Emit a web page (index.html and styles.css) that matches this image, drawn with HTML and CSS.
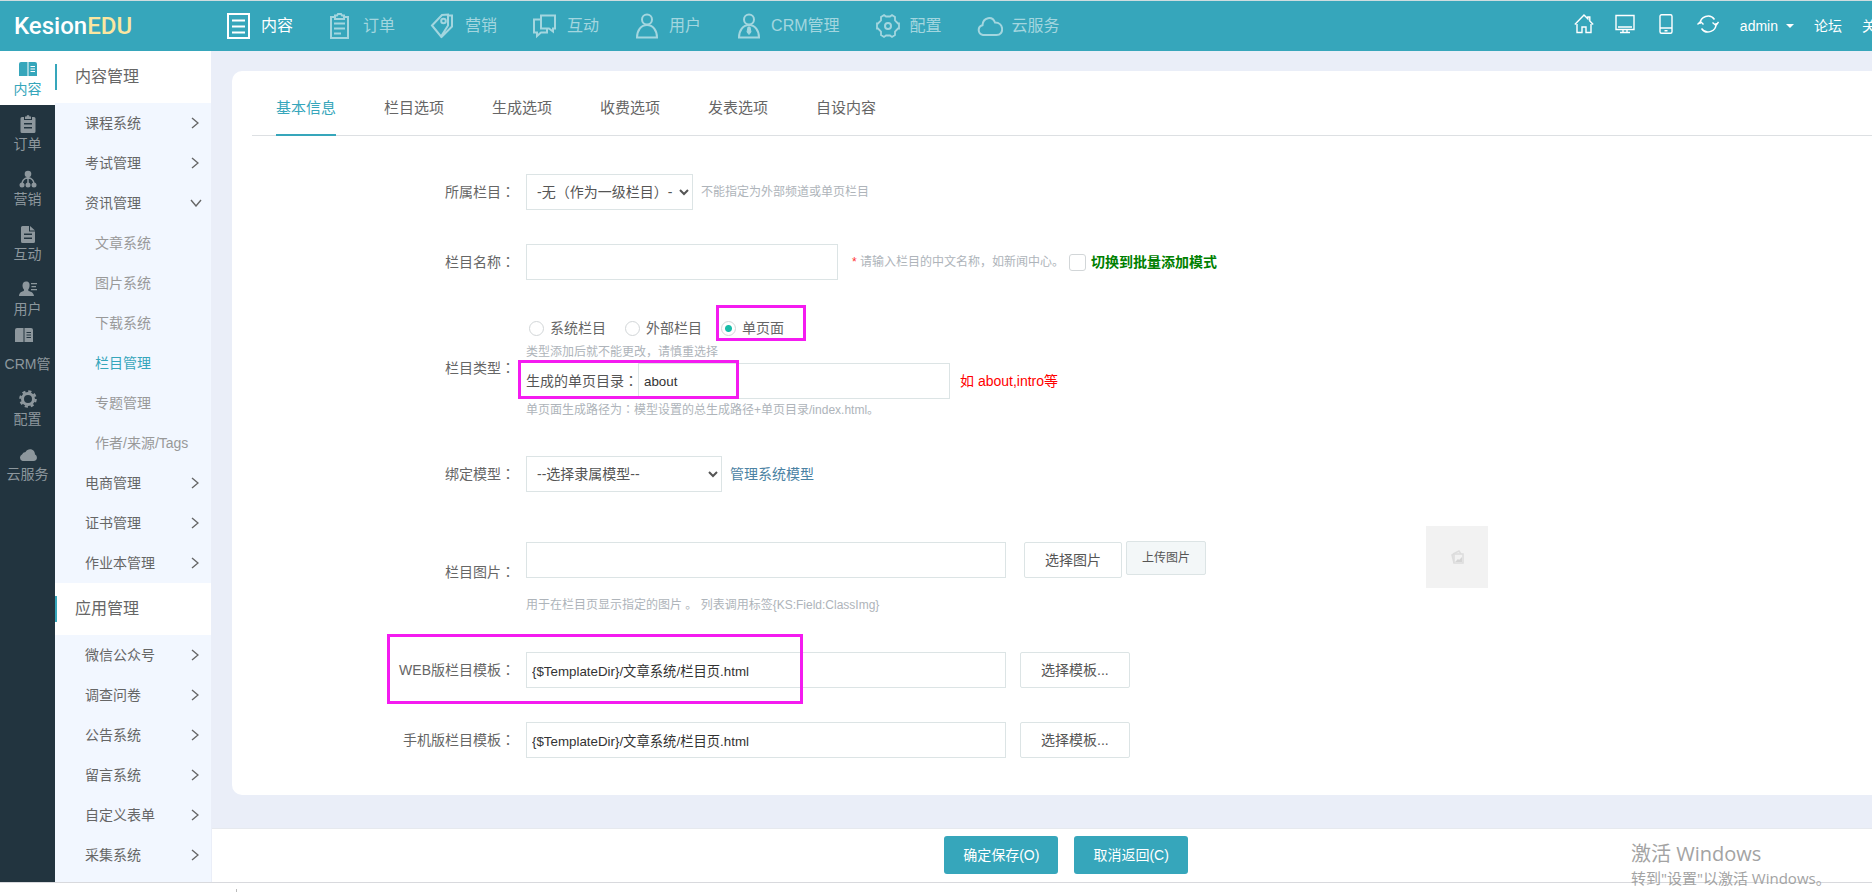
FILE: index.html
```html
<!DOCTYPE html>
<html lang="zh-CN">
<head>
<meta charset="utf-8">
<title>KesionEDU</title>
<link rel="stylesheet" href="styles.css">
</head>
<body>
<svg class="defs" aria-hidden="true">
  <symbol id="right" viewBox="0 0 8 12"><path d="M1 1l6 5-6 5" fill="none" stroke="currentColor" stroke-width="1.4"/></symbol>
  <symbol id="down" viewBox="0 0 12 8"><path d="M1 1l5 6 5-6" fill="none" stroke="currentColor" stroke-width="1.4"/></symbol>
  <symbol id="book" viewBox="0 0 18 14"><path d="M2 0h6.500v14H0V2a2 2 0 0 1 2-2zM9.500 0H16a2 2 0 0 1 2 2v12H9.500zM11.500 4v1H16V4zm0 2.500v1H16v-1zm0 2.500v1H16V9z" fill="currentColor" fill-rule="evenodd"/></symbol>
</svg>
<header class="topbar">
  <a class="logo" href="#">Kesion<span class="logo-edu">EDU</span></a>
  <nav class="topnav">
    <a class="topnav-item active" href="#"><svg class="nav-icon" viewBox="0 0 26 26"><path d="M2 1h21v24H2zM6 7.500h13M6 13.500h13M6 19.500h13"/></svg>内容</a>
    <a class="topnav-item" href="#"><svg class="nav-icon" viewBox="0 0 26 26"><path d="M7 4H3v21h17V4h-4M7 2.500h2l1-1.500h3l1 1.500h2V6H7zM6 10.500h11M6 15.500h11M6 20.500h7"/></svg>订单</a>
    <a class="topnav-item" href="#"><svg class="nav-icon" viewBox="0 0 26 26"><path d="M2 12.500L12 2l6-.5v11L11 23.500zM18 2.500h4v11L11 24.500"/><circle cx="13.500" cy="8" r="2.300"/></svg>营销</a>
    <a class="topnav-item" href="#"><svg class="nav-icon" viewBox="0 0 26 26"><path d="M9 2.500h14v13h-2v3l-4-3H9zM9 6.500H2v13h3V23l4-3.500h6v-4"/></svg>互动</a>
    <a class="topnav-item" href="#"><svg class="nav-icon" viewBox="0 0 26 26"><circle cx="13" cy="6.500" r="5"/><path d="M3 24.500c0-7 4-12.500 10-12.500s10 5.500 10 12.500z"/></svg>用户</a>
    <a class="topnav-item" href="#"><svg class="nav-icon" viewBox="0 0 26 26"><circle cx="13" cy="6.500" r="5"/><path d="M3 24.500c0-7 4-12.500 10-12.500s10 5.500 10 12.500z"/><path d="M12 14h2l1 5-2 2.500-2-2.500z" fill="currentColor" stroke-width="1"/></svg>CRM管理</a>
    <a class="topnav-item" href="#"><svg class="nav-icon" viewBox="0 0 26 26"><path d="M9 2l2 1.500h4L17 2l3 2v3.500l3 3h1v5h-1l-3 3V22l-3 2-2-1.500h-4L9 24l-3-2v-3.500l-3-3H2v-5h1l3-3V4z" stroke-width="1.800"/><circle cx="13" cy="13" r="3"/></svg>配置</a>
    <a class="topnav-item" href="#"><svg class="nav-icon" viewBox="0 0 26 26"><path d="M6 22a5 5 0 0 1-.5-9.800C6 4 15.500 2.500 18 9.500c9 0 9.500 12.500 1.500 12.500z"/></svg>云服务</a>
  </nav>
  <div class="tools">
    <a class="tool" href="#" aria-label="首页"><svg class="tool-icon" viewBox="0 0 20 20"><path d="M.8 10.500L10 1l3.800 3.800V3h2v4l3.400 3.500M3 10v8.500h5V13h4v5.500h5V10"/></svg></a>
    <a class="tool" href="#" aria-label="电脑版"><svg class="tool-icon" viewBox="0 0 20 20"><path d="M1 1.500h18v14H1zM3 13h14M8 16v2M12 16v2M5 18.500h10"/></svg></a>
    <a class="tool" href="#" aria-label="手机版"><svg class="tool-icon" viewBox="0 0 20 20"><rect x="4" y=".7" width="12" height="18.500" rx="1.500"/><path d="M4 14h12M8.500 16.800h3"/></svg></a>
    <a class="tool" href="#" aria-label="刷新"><svg class="tool-icon refresh" viewBox="0 0 22 20"><path d="M3 10a8 8 0 0 1 14.500-4.500M19 9a8 8 0 0 1-14.500 5.500M.5 10.500L3.500 7.500l3 3M15.500 8.500l3.500 3 2.500-3.500"/></svg></a>
    <a class="user" href="#">admin <span class="caret"></span></a>
    <a class="tool-text" href="#">论坛</a>
    <a class="tool-text" href="#">关于</a>
  </div>
</header>
<div class="body">
  <nav class="rail">
    <a class="rail-item active" href="#"><svg class="rail-icon" viewBox="0 0 18 18"><use href="#book" width="18" height="14" y="2"/></svg>内容</a>
    <a class="rail-item" href="#"><svg class="rail-icon" viewBox="0 0 18 18"><path fill-rule="evenodd" d="M3 2h2v3h8V2h2a1.500 1.500 0 0 1 1.500 1.500v13A1.500 1.500 0 0 1 15 18H3a1.500 1.500 0 0 1-1.500-1.500v-13A1.500 1.500 0 0 1 3 2zM6 1.500h1.500a1.500 1.500 0 0 1 3 0H12V4H6zM5 8v1.500h8V8zm0 4v1.500h8V12z"/></svg>订单</a>
    <a class="rail-item" href="#"><svg class="rail-icon" viewBox="0 0 18 18"><circle cx="9" cy="4" r="3.300"/><circle cx="3" cy="15" r="2.500"/><circle cx="9" cy="15" r="2.500"/><circle cx="15" cy="15" r="2.500"/><path d="M9 6v8M9 7.500Q3 9 3 14M9 7.500q6 1.500 6 6.500" fill="none" stroke="currentColor" stroke-width="1.500"/></svg>营销</a>
    <a class="rail-item" href="#"><svg class="rail-icon" viewBox="0 0 18 18"><path fill-rule="evenodd" d="M3.500 1H10v5.500h6v10a1.500 1.500 0 0 1-1.500 1.500h-11A1.500 1.500 0 0 1 2 16.500v-14A1.500 1.500 0 0 1 3.500 1zM11 1l5 4.500h-5zM5 8.500V10h8V8.500zm0 4V14h8v-1.500z"/></svg>互动</a>
    <a class="rail-item" href="#"><svg class="rail-icon" viewBox="0 0 18 18"><path d="M7 1.500c3 0 4 2 3.500 5-.3 1.500-.8 2.500-1.300 3l.3 1.500c3 1 5 1.500 5.500 5H0c.3-3.500 2-4 4.800-5L5 9.500C4 8.500 3.500 7 3.500 5.500c0-2.500 1.500-4 3.500-4zM12 3h6v1.300h-6zM12.500 6H17v1.300h-4.500zM12 9h6v1.300h-6z"/></svg>用户</a>
    <a class="rail-item wrapped" href="#"><svg class="rail-icon" viewBox="0 0 18 18"><use href="#book" width="18" height="14" y="2"/></svg>CRM管</a>
    <a class="rail-item" href="#"><svg class="rail-icon" viewBox="0 0 18 18"><circle cx="9" cy="9" r="5.500" fill="none" stroke="currentColor" stroke-width="3"/><circle cx="9" cy="9" r="7.700" fill="none" stroke="currentColor" stroke-width="2.200" stroke-dasharray="3.200 2.850"/></svg>配置</a>
    <a class="rail-item" href="#"><svg class="rail-icon" viewBox="0 0 18 18"><path d="M3.500 16A3.500 3.500 0 0 1 3 9.500 4 4 0 0 1 6.500 7C9 2.500 16 4 16 9.500c3 1.500 2.500 6.500-1.500 6.500z"/></svg>云服务</a>
  </nav>
  <nav class="menu">
    <h2 class="menu-title">内容管理</h2>
    <a class="menu-item" href="#">课程系统<svg class="chev"><use href="#right"/></svg></a>
    <a class="menu-item" href="#">考试管理<svg class="chev"><use href="#right"/></svg></a>
    <a class="menu-item" href="#">资讯管理<svg class="chev open"><use href="#down"/></svg></a>
    <a class="menu-item sub" href="#">文章系统</a>
    <a class="menu-item sub" href="#">图片系统</a>
    <a class="menu-item sub" href="#">下载系统</a>
    <a class="menu-item sub current" href="#">栏目管理</a>
    <a class="menu-item sub" href="#">专题管理</a>
    <a class="menu-item sub" href="#">作者/来源/Tags</a>
    <a class="menu-item" href="#">电商管理<svg class="chev"><use href="#right"/></svg></a>
    <a class="menu-item" href="#">证书管理<svg class="chev"><use href="#right"/></svg></a>
    <a class="menu-item" href="#">作业本管理<svg class="chev"><use href="#right"/></svg></a>
    <h2 class="menu-title">应用管理</h2>
    <a class="menu-item" href="#">微信公众号<svg class="chev"><use href="#right"/></svg></a>
    <a class="menu-item" href="#">调查问卷<svg class="chev"><use href="#right"/></svg></a>
    <a class="menu-item" href="#">公告系统<svg class="chev"><use href="#right"/></svg></a>
    <a class="menu-item" href="#">留言系统<svg class="chev"><use href="#right"/></svg></a>
    <a class="menu-item" href="#">自定义表单<svg class="chev"><use href="#right"/></svg></a>
    <a class="menu-item" href="#">采集系统<svg class="chev"><use href="#right"/></svg></a>
  </nav>
  <main class="main">
    <section class="card">
      <div class="tabs">
        <a class="tab active" href="#">基本信息</a>
        <a class="tab" href="#">栏目选项</a>
        <a class="tab" href="#">生成选项</a>
        <a class="tab" href="#">收费选项</a>
        <a class="tab" href="#">发表选项</a>
        <a class="tab" href="#">自设内容</a>
      </div>
      <form class="form" id="column-form">
        <div class="row">
          <label class="label" for="parent">所属栏目<span class="colon" lang="zh-TW">：</span></label>
          <div class="line">
            <select class="select parent" id="parent"><option>-无（作为一级栏目）-</option></select>
            <span class="hint after-select">不能指定为外部频道或单页栏目</span>
          </div>
        </div>
        <div class="row">
          <label class="label" for="name">栏目名称<span class="colon" lang="zh-TW">：</span></label>
          <div class="line">
            <input class="input medium" id="name" type="text">
            <span class="hint after-name"><span class="star">*</span> 请输入栏目的中文名称，如新闻中心。</span>
            <input class="check" id="batch" type="checkbox"><label class="batch" for="batch">切换到批量添加模式</label>
          </div>
        </div>
        <div class="row">
          <span class="label">栏目类型<span class="colon" lang="zh-TW">：</span></span>
          <div class="kind">
            <div class="radios">
              <label class="radio-label"><input class="radio" type="radio" name="kind">系统栏目</label>
              <label class="radio-label"><input class="radio" type="radio" name="kind">外部栏目</label>
              <label class="radio-label"><input class="radio" type="radio" name="kind" checked>单页面<span class="mark mark-kind"></span></label>
            </div>
            <div class="hint">类型添加后就不能更改，请慎重选择</div>
            <div class="line folder">
              <label for="dir">生成的单页目录<span class="colon" lang="zh-TW">：</span></label>
              <input class="input medium" id="dir" type="text" value="about">
              <span class="example">如 about,intro等</span>
              <span class="mark mark-dir"></span>
            </div>
            <div class="hint">单页面生成路径为<span class="colon" lang="zh-TW">：</span>模型设置的总生成路径+单页目录/index.html。</div>
          </div>
        </div>
        <div class="row">
          <label class="label" for="model">绑定模型<span class="colon" lang="zh-TW">：</span></label>
          <div class="line">
            <select class="select model" id="model"><option>--选择隶属模型--</option></select>
            <a class="link after-select" href="#">管理系统模型</a>
          </div>
        </div>
        <div class="row">
          <label class="label" for="pic">栏目图片<span class="colon" lang="zh-TW">：</span></label>
          <div class="picture">
            <div class="picture-fields">
              <div class="line">
                <input class="input wide" id="pic" type="text">
                <button class="button pick" type="button">选择图片</button>
                <button class="button upload" type="button">上传图片</button>
              </div>
              <div class="hint picture-hint">用于在栏目页显示指定的图片 。 列表调用标签{KS:Field:ClassImg}</div>
            </div>
            <svg class="thumb" viewBox="0 0 62 62"><path d="M27 28l6-3 2 3M28 37l-2-8 2-1" fill="none" stroke="#ddd" stroke-width="1.500"/><rect x="28" y="28" width="9" height="9" fill="#f2f2f2" stroke="#dcdcdc" stroke-width="1.500"/><path d="M29 36l3-3 1 1 3-3v5z" fill="#d4d4d4"/></svg>
          </div>
        </div>
        <div class="row">
          <label class="label" for="web">WEB版栏目模板<span class="colon" lang="zh-TW">：</span></label>
          <div class="line">
            <input class="input wide" id="web" type="text" value="{$TemplateDir}/文章系统/栏目页.html">
            <button class="button template" type="button">选择模板...</button>
          </div>
          <span class="mark mark-web"></span>
        </div>
        <div class="row">
          <label class="label" for="mobile">手机版栏目模板<span class="colon" lang="zh-TW">：</span></label>
          <div class="line">
            <input class="input wide" id="mobile" type="text" value="{$TemplateDir}/文章系统/栏目页.html">
            <button class="button template" type="button">选择模板...</button>
          </div>
        </div>
      </form>
    </section>
    <footer class="actions">
      <button class="primary" type="submit" form="column-form">确定保存(O)</button>
      <button class="primary" type="button">取消返回(C)</button>
    </footer>
  </main>
</div>
<div class="strip"><span class="tick"></span></div>
<aside class="watermark">
  <div class="watermark-title">激活 Windows</div>
  <div class="watermark-text">转到"设置"以激活 Windows。</div>
</aside>
</body>
</html>
```

FILE: styles.css
```css
* { box-sizing: border-box; }

body {
  margin: 0;
  min-height: 100vh;
  position: relative;
  display: flex;
  flex-direction: column;
  overflow: hidden;
  background: #fff;
  color: #666;
  font: 14px/20px "Liberation Sans", "Noto Sans CJK SC", sans-serif;
}

a { color: inherit; text-decoration: none; }
.defs { position: absolute; width: 0; height: 0; }

/* Top bar */
.topbar {
  display: flex;
  align-items: center;
  height: 51px;
  border-top: 1px solid #cfdcdf;
  background: #36a6bb;
  color: #fff;
  white-space: nowrap;
  overflow: hidden;
}
.logo { width: 226px; padding-left: 14px; font-family: Roboto, "Liberation Sans", sans-serif; font-size: 24px; font-weight: 500; line-height: 28px; }
.logo-edu { color: #fbe6a0; }
.topnav { display: flex; gap: 35px; font-size: 16px; }
.topnav-item { display: flex; align-items: center; gap: 9px; color: #a3d6df; }
.topnav-item.active { color: #fff; }
.nav-icon { width: 26px; height: 26px; fill: none; stroke: currentColor; stroke-width: 2; }
.tools { display: flex; align-items: center; margin-left: auto; margin-right: -18px; }
.tool { display: flex; margin-right: 21px; margin-bottom: 4px; }
.tool-icon { width: 20px; height: 20px; fill: none; stroke: #fff; stroke-width: 1.4; }
.tool-icon.refresh { width: 22px; }
.user { display: flex; align-items: center; gap: 8px; }
.caret { border: 4px solid transparent; border-top-color: #fff; border-bottom: 0; }
.tool-text { margin-left: 20px; }

/* Side navigation */
.body { display: flex; flex: 1; border-bottom: 1px solid #d8d9dd; }
.rail { width: 55px; background: #22343f; color: #8d979d; }
.rail-item {
  display: flex;
  flex-direction: column;
  align-items: center;
  height: 55px;
  padding-top: 10px;
  gap: 1px;
  white-space: nowrap;
}
.rail-item.active { height: 54px; padding-top: 9px; background: #fff; color: #36a6bb; }
.rail-item.wrapped { padding-top: 1px; gap: 10px; }
.rail-item.wrapped .rail-icon { margin-right: 7px; }
.rail-icon { width: 18px; height: 18px; fill: currentColor; }
.menu { width: 156px; background: #f2f7ff; }
.menu-title {
  display: flex;
  align-items: center;
  height: 52px;
  margin: 0;
  background: #fff;
  font-size: 16px;
  font-weight: 400;
}
.menu-title::before { content: ""; width: 2px; height: 26px; margin-right: 18px; background: #36a6bb; }
.menu-item {
  display: flex;
  align-items: center;
  justify-content: space-between;
  height: 40px;
  padding: 0 12px 0 30px;
}
.menu-item.sub { padding-left: 40px; color: #999; }
.menu-item.current { color: #36a6bb; }
.chev { width: 8px; height: 12px; }
.chev.open { width: 12px; height: 8px; margin-right: -3px; }

/* Content */
.main { flex: 1; display: flex; flex-direction: column; min-width: 0; background: #eaeef8; }
.card { margin: 20px 0 33px 21px; padding-bottom: 37px; border-radius: 10px 0 0 10px; background: #fff; }
.tabs {
  display: flex;
  gap: 48px;
  margin-left: 20px;
  padding-left: 24px;
  border-bottom: 1px solid #dde0e3;
  font-size: 15px;
}
.tab { padding: 26px 0 16px; margin-bottom: -1px; line-height: 21px; border-bottom: 2px solid transparent; }
.tab.active { color: #36a6bb; border-color: #36a6bb; }

.form { display: flex; flex-direction: column; gap: 34px; padding: 38px 0 0 20px; }
.row { position: relative; display: grid; grid-template-columns: 263px 1fr; column-gap: 11px; align-items: center; }
.label { text-align: right; }
.colon { font-family: "Noto Sans CJK TC", sans-serif; line-height: 1; }
.line { display: flex; align-items: center; white-space: nowrap; }
.hint { color: #aeb4ba; font-size: 12px; }
.input, .select {
  height: 36px;
  border: 1px solid #dce4e5;
  border-radius: 0;
  background: #fff;
  color: #333;
  font-family: inherit;
}
.input { padding: 0 5px; }
.select { padding: 0 0 0 6px; color: #555; font-size: 14px; }
.parent { width: 167px; }
.model { width: 196px; }
.medium { width: 312px; }
.wide { width: 480px; }
.after-select { margin-left: 8px; }
.after-name { margin-left: 14px; }
.star { color: #f33; }
.check, .radio { appearance: none; margin: 0; border: 1px solid #d2d6d8; background: #fff; }
.check { width: 17px; height: 17px; margin: 0 5px; border-radius: 3px; }
.batch { color: #008000; font-weight: 700; }
.kind { padding-bottom: 2px; }
.radios { display: flex; gap: 19px; height: 28px; padding-left: 3px; }
.radio-label { position: relative; display: flex; align-items: center; gap: 6px; }
.radio { width: 15px; height: 15px; border-radius: 50%; }
.radio:checked { background: radial-gradient(circle, #19bca8 0 3px, #fff 4px); }
.folder { position: relative; margin: 1px 0; color: #555; }
.example { margin-left: 10px; color: #f00; }
.link { color: #4b82a3; }
.picture { display: flex; height: 92px; }
.picture-fields { width: 900px; padding-top: 15px; }
.picture-hint { margin-top: 16px; }
.thumb { width: 62px; height: 62px; background: #f2f2f2; }
.button {
  height: 36px;
  padding: 0 20px;
  border: 1px solid #dce4e5;
  border-radius: 2px;
  background: #fff;
  color: #555;
  font: inherit;
}
.pick { margin-left: 18px; }
.upload { height: 34px; margin: 0 0 4px 4px; padding: 0 15px; background: #f3f7f8; font-size: 12px; }
.template { margin-left: 14px; }

/* Highlight frames over the form */
.mark { position: absolute; border: 3px solid #f41bf0; pointer-events: none; }
.mark-kind { left: -5px; top: -9px; width: 90px; height: 36px; }
.mark-dir { left: -8px; top: -3px; width: 221px; height: 39px; }
.mark-web { left: 135px; top: -18px; width: 416px; height: 70px; }

.actions {
  display: flex;
  justify-content: center;
  gap: 16px;
  flex: 1;
  margin-left: 1px;
  padding: 7px 0 7px 48px;
  border-top: 1px solid #e6e9ee;
  background: #fff;
}
.primary {
  height: 38px;
  padding: 0 19px;
  border: 0;
  border-radius: 3px;
  background: #36a6bb;
  color: #fff;
  font: inherit;
}
.strip { display: flex; align-items: flex-end; height: 9px; padding-left: 236px; }
.tick { width: 1px; height: 3px; background: #bbb; }

.watermark {
  position: absolute;
  right: 41px;
  bottom: 4px;
  width: 200px;
  color: #a3a3a3;
  font-family: "Open Sans", "Noto Sans CJK SC", sans-serif;
  white-space: nowrap;
}
.watermark-title { font-size: 20px; line-height: 28px; }
.watermark-text { font-size: 15px; line-height: 20px; }
```
